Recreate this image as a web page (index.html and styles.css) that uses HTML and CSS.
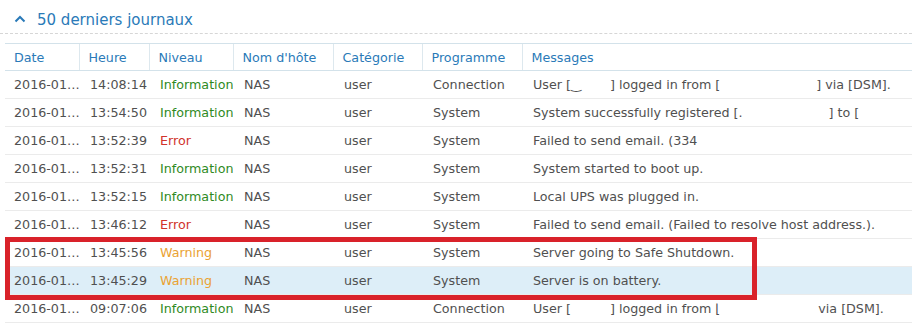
FILE: index.html
```html
<!DOCTYPE html>
<html lang="fr">
<head>
    <meta charset="UTF-8">
    <link rel="stylesheet" href="styles.css">
</head>
<body>
    <div class="panel">
        <!-- Section title -->
        <div class="panel-title">
            <svg class="chevron" width="12" height="8" viewBox="0 0 12 8">
                <path d="M1.5 6.5 L6 2 L10.5 6.5" fill="none" stroke="#2a7ab8" stroke-width="2"/>
            </svg>
            <span>50 derniers journaux</span>
        </div>

        <table class="log-table">
            <colgroup>
                <col style="width: 74px">
                <col style="width: 70px">
                <col style="width: 84px">
                <col style="width: 100px">
                <col style="width: 89px">
                <col style="width: 100px">
                <col>
            </colgroup>
            <thead>
                <tr>
                    <th>Date</th>
                    <th>Heure</th>
                    <th>Niveau</th>
                    <th>Nom d'hôte</th>
                    <th>Catégorie</th>
                    <th>Programme</th>
                    <th>Messages</th>
                </tr>
            </thead>
            <tbody>
                <tr>
                    <td class="date">2016-01…</td><td>14:08:14</td><td class="info">Information</td><td>NAS</td><td>user</td><td>Connection</td>
                    <td>User [<span class="blank b1">‿</span>] logged in from [<span class="blank b2"></span>] via [DSM].</td>
                </tr>
                <tr>
                    <td class="date">2016-01…</td><td>13:54:50</td><td class="info">Information</td><td>NAS</td><td>user</td><td>System</td>
                    <td>System successfully registered [.<span class="blank b3"></span>] to [</td>
                </tr>
                <tr>
                    <td class="date">2016-01…</td><td>13:52:39</td><td class="error">Error</td><td>NAS</td><td>user</td><td>System</td>
                    <td>Failed to send email. (334</td>
                </tr>
                <tr>
                    <td class="date">2016-01…</td><td>13:52:31</td><td class="info">Information</td><td>NAS</td><td>user</td><td>System</td>
                    <td>System started to boot up.</td>
                </tr>
                <tr>
                    <td class="date">2016-01…</td><td>13:52:15</td><td class="info">Information</td><td>NAS</td><td>user</td><td>System</td>
                    <td>Local UPS was plugged in.</td>
                </tr>
                <tr>
                    <td class="date">2016-01…</td><td>13:46:12</td><td class="error">Error</td><td>NAS</td><td>user</td><td>System</td>
                    <td>Failed to send email. (Failed to resolve host address.).</td>
                </tr>
                <tr>
                    <td class="date">2016-01…</td><td>13:45:56</td><td class="warning">Warning</td><td>NAS</td><td>user</td><td>System</td>
                    <td>Server going to Safe Shutdown.</td>
                </tr>
                <tr class="selected">
                    <td class="date">2016-01…</td><td>13:45:29</td><td class="warning">Warning</td><td>NAS</td><td>user</td><td>System</td>
                    <td>Server is on battery.</td>
                </tr>
                <tr>
                    <td class="date">2016-01…</td><td>09:07:06</td><td class="info">Information</td><td>NAS</td><td>user</td><td>Connection</td>
                    <td>User [<span class="blank b1"></span>] logged in from ⌊<span class="blank b4"></span>via [DSM].</td>
                </tr>
            </tbody>
        </table>

        <!-- highlight drawn over the two warning rows -->
        <div class="highlight-box"></div>
    </div>
</body>
</html>
```

FILE: styles.css
```css
body {
    margin: 0;
    background-color: #fff;
    font-family: "DejaVu Sans", Verdana, sans-serif;
    color: #505050;
}
.panel {
    position: relative;
    padding: 0 0 0 5px;
    height: 326px;
    overflow: hidden;
}
.panel-title {
    display: flex;
    align-items: center;
    height: 34px;
    margin-left: -5px;
    padding: 6px 0 0 14px;
    color: #2a7ab8;
    font-size: 15px;
    border-bottom: 1px dashed #d6d6d6;
    box-sizing: border-box;
}
.panel-title .chevron {
    margin-right: 11px;
    margin-top: -2px;
}
.log-table {
    margin-top: 9px;
    width: 907px;
    table-layout: fixed;
    border-collapse: collapse;
    font-size: 12.7px;
}
.log-table th {
    height: 26px;
    padding: 0 0 0 9px;
    text-align: left;
    font-weight: normal;
    color: #2a7ab8;
    border-top: 1px solid #d3e2ea;
    border-bottom: 1px solid #d3e2ea;
    border-left: 1px solid #dde8ee;
}
.log-table th:first-child {
    border-left: none;
}
.log-table td {
    height: 27px;
    padding: 0 2px 0 11px;
    border-bottom: 1px solid #ebebeb;
    white-space: nowrap;
    overflow: hidden;
}
.log-table td.date {
    padding-left: 9px;
    padding-right: 0;
}
.log-table tr.selected td {
    background-color: #ddeef8;
}
.info {
    color: #2f8a1e;
}
.error {
    color: #d0332b;
}
.warning {
    color: #eaa233;
}
.blank {
    display: inline-block;
    vertical-align: top;
}
.b1 {
    width: 39px;
}
.b2 {
    width: 96px;
}
.b3 {
    width: 86px;
}
.b4 {
    width: 98px;
}
.highlight-box {
    position: absolute;
    left: 5px;
    top: 237px;
    width: 752px;
    height: 63px;
    border: 5px solid #d9222a;
    box-sizing: border-box;
}
```
